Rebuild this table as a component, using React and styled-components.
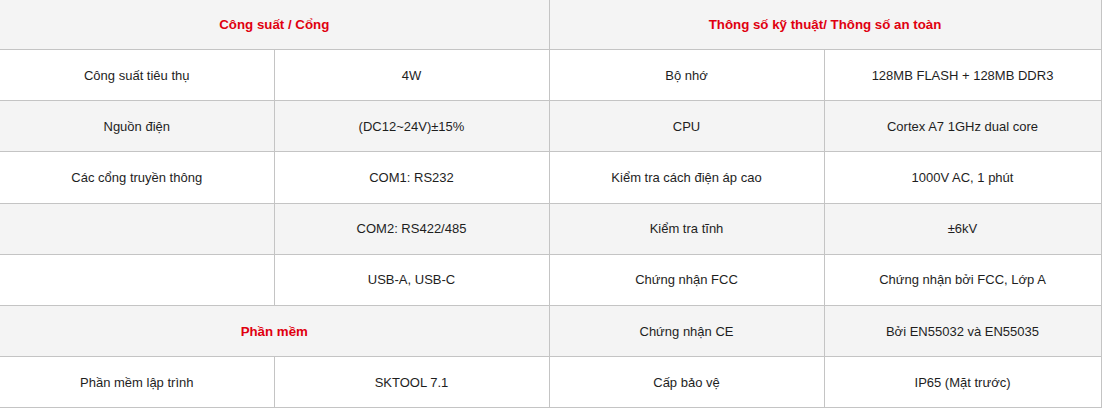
import React from "react";
import styled, { createGlobalStyle } from "styled-components";

const Global = createGlobalStyle`
  html, body { margin: 0; padding: 0; background: #fff; }
  body { font-family: "Liberation Sans", Arial, sans-serif; }
`;

const Table = styled.table`
  width: 1101px;
  border-collapse: collapse;
  table-layout: fixed;
  font-family: "Liberation Sans", Arial, sans-serif;
  font-size: 13px;
  color: #1e1e1e;
  border-right: 1px solid #c4c4c4;
`;

const Row = styled.tr`
  height: ${(p) => (p.$head ? "49.5px" : "51.2px")};
  background: ${(p) => (p.$shade ? "#f4f4f4" : "#fff")};
`;

const Cell = styled.td`
  padding: 0 8px;
  text-align: center;
  vertical-align: middle;
  border-bottom: 1px solid #c4c4c4;
  border-right: 1px solid #c4c4c4;
`;

const HeadCell = styled(Cell)`
  color: #e0000f;
  font-weight: bold;
  font-size: 13.3px;
`;

const rows = [
  ["Công suất tiêu thụ", "4W", "Bộ nhớ", "128MB FLASH + 128MB DDR3"],
  ["Nguồn điện", "(DC12~24V)±15%", "CPU", "Cortex A7 1GHz dual core"],
  ["Các cổng truyền thông", "COM1: RS232", "Kiểm tra cách điện áp cao", "1000V AC, 1 phút"],
  ["", "COM2: RS422/485", "Kiểm tra tĩnh", "±6kV"],
  ["", "USB-A, USB-C", "Chứng nhận FCC", "Chứng nhận bởi FCC, Lớp A"],
];

export default function App() {
  return (
    <>
      <Global />
      <Table>
        <colgroup>
          <col style={{ width: 274 }} />
          <col style={{ width: 275 }} />
          <col style={{ width: 275 }} />
          <col style={{ width: 277 }} />
        </colgroup>
        <tbody>
          <Row $head $shade>
            <HeadCell colSpan={2}>Công suất / Cổng</HeadCell>
            <HeadCell colSpan={2}>Thông số kỹ thuật/ Thông số an toàn</HeadCell>
          </Row>
          {rows.map((r, i) => (
            <Row key={i} $shade={i % 2 === 1}>
              {r.map((c, j) => (
                <Cell key={j}>{c}</Cell>
              ))}
            </Row>
          ))}
          <Row $shade>
            <HeadCell colSpan={2}>Phần mềm</HeadCell>
            <Cell>Chứng nhận CE</Cell>
            <Cell>Bởi EN55032 và EN55035</Cell>
          </Row>
          <Row>
            <Cell>Phần mềm lập trình</Cell>
            <Cell>SKTOOL 7.1</Cell>
            <Cell>Cấp bảo vệ</Cell>
            <Cell>IP65 (Mặt trước)</Cell>
          </Row>
        </tbody>
      </Table>
    </>
  );
}
